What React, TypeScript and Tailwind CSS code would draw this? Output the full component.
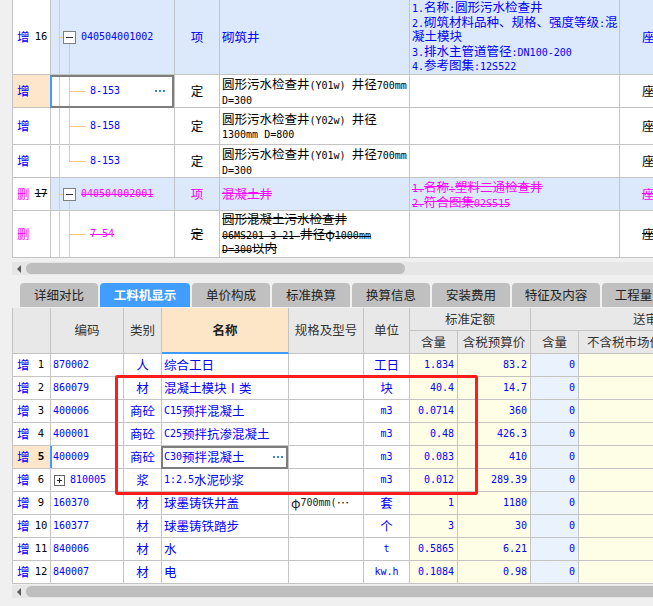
import React from "react";

const MONO = "font-['DejaVu_Sans_Mono',monospace] text-[10px] leading-none";
const MONOD = "font-['DejaVu_Sans_Mono',monospace] text-[10px] leading-none line-through";
const TL = "absolute bg-[#f5c788]";
const TOPCOLS = "grid grid-cols-[38px_124px_45px_190px_210px_60px]";
const BOTCOLS = "grid grid-cols-[38px_73px_38px_127px_75px_46px_48px_73px_48px_92px_90px]";
const C = "relative border-r border-b border-[#c4c4c4] whitespace-nowrap";
const BLUE = "text-[#0000ff]";
const MAG = "text-[#ff00ff]";
const LB = "bg-[#dce8fb]";

function M({ t, del }: { t: string; del?: boolean }) {
  const parts = t.split(/([\x20-\x7E]+)/).filter((p) => p !== "");
  return (
    <>
      {parts.map((p, i) =>
        /^[\x20-\x7E]+$/.test(p) ? (
          <span key={i} className={del ? MONOD : MONO}>
            {p}
          </span>
        ) : (
          <span key={i} className={del ? "line-through" : ""}>
            {p}
          </span>
        )
      )}
    </>
  );
}

function Label({ mark, n, del, bold }: { mark: string; n: string; del?: boolean; bold?: boolean }) {
  return (
    <div className="flex items-center h-full pl-[4px]">
      <span className={del ? MAG : BLUE}>{mark}</span>
      <span
        className={
          bold
            ? "font-['DejaVu_Sans_Mono',monospace] text-[11px] font-bold ml-[3px] w-[17px] text-center"
            : del
            ? "font-['DejaVu_Sans_Mono',monospace] text-[10.5px] ml-[3px] w-[17px] text-center line-through"
            : "font-['DejaVu_Sans_Mono',monospace] text-[10.5px] ml-[3px] w-[17px] text-center"
        }
      >
        {n}
      </span>
    </div>
  );
}

function Dots({ cls }: { cls: string }) {
  return (
    <div className={cls}>
      <i className="block w-[2px] h-[2px] bg-[#3b86d6]" />
      <i className="block w-[2px] h-[2px] bg-[#3b86d6]" />
      <i className="block w-[2px] h-[2px] bg-[#3b86d6]" />
    </div>
  );
}

function MinusBox({ cls }: { cls: string }) {
  return (
    <div className={cls}>
      <div className="w-[7px] h-px bg-[#333]" />
    </div>
  );
}

function L({ t, del, h }: { t: string; del?: boolean; h: string }) {
  return (
    <div className={h}>
      <M t={t} del={del} />
    </div>
  );
}

function TopGrid() {
  return (
    <div className="ml-[12px] border-l border-[#c4c4c4]">
      {/* Row 16 */}
      <div className={`${TOPCOLS} h-[75px]`}>
        <div className={`${C} bg-white`}>
          <Label mark="增" n="16" />
        </div>
        <div className={`${C} ${LB} flex items-center`}>
          <div className={`${TL} left-[8px] top-0 bottom-[-1px] w-px`} />
          <div className={`${TL} left-[8px] top-[37px] w-[4px] h-px`} />
          <MinusBox cls="absolute left-[12px] top-[31px] w-[13px] h-[13px] border border-[#808080] bg-white flex items-center justify-center" />
          <div className={`${TL} left-[18px] top-[44px] bottom-[-1px] w-px`} />
          <span className={`${MONO} ${BLUE} ml-[30px]`}>040504001002</span>
        </div>
        <div className={`${C} ${LB} flex items-center justify-center ${BLUE}`}>项</div>
        <div className={`${C} ${LB} flex items-center pl-[2px] ${BLUE}`}>砌筑井</div>
        <div className={`${C} ${LB} flex flex-col pl-[2px] ${BLUE}`}>
          <L h="h-[14.5px] leading-[14.5px]" t="1.名称:圆形污水检查井" />
          <L h="h-[14.5px] leading-[14.5px]" t="2.砌筑材料品种、规格、强度等级:混" />
          <L h="h-[14.5px] leading-[14.5px]" t="凝土模块" />
          <L h="h-[14.5px] leading-[14.5px]" t="3.排水主管道管径:DN100-200" />
          <L h="h-[14.5px] leading-[14.5px]" t="4.参考图集:12S522" />
        </div>
        <div className={`${C} ${LB} flex items-center pl-[22px] ${BLUE}`}>座</div>
      </div>

      {/* 8-153 selected */}
      <div className={`${TOPCOLS} h-[33px]`}>
        <div className={`${C} bg-[#fde6c9]`}>
          <Label mark="增" n="" />
        </div>
        <div className={`${C} bg-white flex items-center`}>
          <div className={`${TL} left-[8px] top-[-1px] bottom-[-1px] w-px`} />
          <div className={`${TL} left-[18px] top-[-1px] bottom-[-1px] w-px`} />
          <div className={`${TL} left-[18px] top-[16px] w-[17px] h-px`} />
          <span className={`${MONO} ${BLUE} ml-[39px]`}>8-153</span>
          <Dots cls="absolute right-[9px] top-[15px] flex gap-[2px]" />
          <div className="absolute left-[-1px] top-0 right-0 bottom-[-1px] border-2 border-[#7d7d7d] border-l-[#3f9cff] z-10" />
        </div>
        <div className={`${C} bg-white flex items-center justify-center`}>定</div>
        <div className={`${C} bg-white flex flex-col justify-center pl-[2px]`}>
          <L h="h-[15px] leading-[15px]" t="圆形污水检查井(Y01w) 井径700mm" />
          <L h="h-[15px] leading-[15px]" t="D=300" />
        </div>
        <div className={`${C} bg-white`} />
        <div className={`${C} bg-white flex items-center pl-[22px]`}>座</div>
      </div>

      {/* 8-158 */}
      <div className={`${TOPCOLS} h-[37px]`}>
        <div className={`${C} bg-white`}>
          <Label mark="增" n="" />
        </div>
        <div className={`${C} bg-white flex items-center`}>
          <div className={`${TL} left-[8px] top-[-1px] bottom-[-1px] w-px`} />
          <div className={`${TL} left-[18px] top-[-1px] bottom-[-1px] w-px`} />
          <div className={`${TL} left-[18px] top-[18px] w-[17px] h-px`} />
          <span className={`${MONO} ${BLUE} ml-[39px]`}>8-158</span>
        </div>
        <div className={`${C} bg-white flex items-center justify-center`}>定</div>
        <div className={`${C} bg-white flex flex-col justify-center pl-[2px]`}>
          <L h="h-[14px] leading-[14px]" t="圆形污水检查井(Y02w) 井径" />
          <L h="h-[14px] leading-[14px]" t="1300mm D=800" />
        </div>
        <div className={`${C} bg-white`} />
        <div className={`${C} bg-white flex items-center pl-[22px]`}>座</div>
      </div>

      {/* 8-153 last */}
      <div className={`${TOPCOLS} h-[33px]`}>
        <div className={`${C} bg-white`}>
          <Label mark="增" n="" />
        </div>
        <div className={`${C} bg-white flex items-center`}>
          <div className={`${TL} left-[8px] top-[-1px] bottom-[-1px] w-px`} />
          <div className={`${TL} left-[18px] top-[-1px] h-[17px] w-px`} />
          <div className={`${TL} left-[18px] top-[16px] w-[17px] h-px`} />
          <span className={`${MONO} ${BLUE} ml-[39px]`}>8-153</span>
        </div>
        <div className={`${C} bg-white flex items-center justify-center`}>定</div>
        <div className={`${C} bg-white flex flex-col justify-center pl-[2px]`}>
          <L h="h-[15px] leading-[15px]" t="圆形污水检查井(Y01w) 井径700mm" />
          <L h="h-[15px] leading-[15px]" t="D=300" />
        </div>
        <div className={`${C} bg-white`} />
        <div className={`${C} bg-white flex items-center pl-[22px]`}>座</div>
      </div>

      {/* Row 17 deleted */}
      <div className={`${TOPCOLS} h-[33px]`}>
        <div className={`${C} bg-white`}>
          <Label mark="删" n="17" del />
        </div>
        <div className={`${C} ${LB} flex items-center`}>
          <div className={`${TL} left-[8px] top-[-1px] bottom-[-1px] w-px`} />
          <div className={`${TL} left-[8px] top-[16px] w-[4px] h-px`} />
          <MinusBox cls="absolute left-[12px] top-[10px] w-[13px] h-[13px] border border-[#808080] bg-white flex items-center justify-center" />
          <div className={`${TL} left-[18px] top-[23px] bottom-[-1px] w-px`} />
          <span className={`${MONOD} ${MAG} ml-[30px]`}>040504002001</span>
        </div>
        <div className={`${C} ${LB} flex items-center justify-center ${MAG}`}>项</div>
        <div className={`${C} ${LB} flex items-center pl-[2px] ${MAG}`}>
          <span className="line-through">混凝土井</span>
        </div>
        <div className={`${C} ${LB} flex flex-col pl-[2px] pt-[1px] ${MAG}`}>
          <L h="h-[15px] leading-[15px]" t="1.名称:塑料二通检查井" del />
          <L h="h-[15px] leading-[15px]" t="2.符合图集02S515" del />
        </div>
        <div className={`${C} ${LB} flex items-center pl-[22px] ${MAG}`}>
          <span className="line-through">座</span>
        </div>
      </div>

      {/* 7-54 */}
      <div className={`${TOPCOLS} h-[47px]`}>
        <div className={`${C} bg-white`}>
          <Label mark="删" n="" del />
        </div>
        <div className={`${C} bg-white flex items-center`}>
          <div className={`${TL} left-[8px] top-[-1px] bottom-[-1px] w-px`} />
          <div className={`${TL} left-[18px] top-[-1px] bottom-[-1px] w-px`} />
          <div className={`${TL} left-[18px] top-[23px] w-[17px] h-px`} />
          <span className={`${MONOD} ${MAG} ml-[39px]`}>7-54</span>
        </div>
        <div className={`${C} bg-white flex items-center justify-center`}>
          <span className="line-through">定</span>
        </div>
        <div className={`${C} bg-white flex flex-col justify-center pl-[2px]`}>
          <L h="h-[14.5px] leading-[14.5px]" t="圆形混凝土污水检查井" del />
          <L h="h-[14.5px] leading-[14.5px]" t="06MS201-3-21 井径φ1000mm" del />
          <L h="h-[14.5px] leading-[14.5px]" t="D=300以内" del />
        </div>
        <div className={`${C} bg-white`} />
        <div className={`${C} bg-white flex items-center pl-[22px]`}>
          <span className="line-through">座</span>
        </div>
      </div>
    </div>
  );
}

function ScrollBar({ full }: { full?: boolean }) {
  return (
    <div className="ml-[12px] h-[13px] bg-[#e6e6e6] flex items-center">
      <div className="ml-[5px] w-0 h-0 border-y-[4px] border-y-transparent border-r-[4px] border-r-[#5a5a5a]" />
      <div
        className={
          full
            ? "ml-[5px] flex-1 h-[11px] rounded-l-full bg-[#bebebe]"
            : "ml-[5px] w-[379px] h-[11px] rounded-full bg-[#bebebe]"
        }
      />
    </div>
  );
}

const TABS: { t: string; w: string; active?: boolean }[] = [
  { t: "详细对比", w: "w-[78px]" },
  { t: "工料机显示", w: "w-[90px]", active: true },
  { t: "单价构成", w: "w-[78px]" },
  { t: "标准换算", w: "w-[78px]" },
  { t: "换算信息", w: "w-[78px]" },
  { t: "安装费用", w: "w-[78px]" },
  { t: "特征及内容", w: "w-[88px]" },
  { t: "工程量明细", w: "w-[88px]" },
];

function Tabs() {
  return (
    <div className="flex gap-[2px] pl-[20px] h-[24px]">
      {TABS.map((tab) => (
        <div
          key={tab.t}
          className={
            tab.active
              ? `${tab.w} shrink-0 h-full rounded-t-[4px] bg-[#419dff] text-white font-bold flex items-center justify-center`
              : `${tab.w} shrink-0 h-full rounded-t-[4px] bg-[#c0c0c0] text-[#222] flex items-center justify-center`
          }
        >
          {tab.t}
        </div>
      ))}
    </div>
  );
}

const H = "bg-[#e8e8e8] border-r border-b border-[#c4c4c4] flex items-center justify-center text-[#333] whitespace-nowrap overflow-hidden";

type Row = {
  n: string;
  code: string;
  type: string;
  name: string;
  spec?: string;
  unit: string;
  q: string;
  p: string;
  sel?: boolean;
  plus?: boolean;
};

const ROWS: Row[] = [
  { n: "1", code: "870002", type: "人", name: "综合工日", unit: "工日", q: "1.834", p: "83.2" },
  { n: "2", code: "860079", type: "材", name: "混凝土模块Ⅰ类", unit: "块", q: "40.4", p: "14.7" },
  { n: "3", code: "400006", type: "商砼", name: "C15预拌混凝土", unit: "m3", q: "0.0714", p: "360" },
  { n: "4", code: "400001", type: "商砼", name: "C25预拌抗渗混凝土", unit: "m3", q: "0.48", p: "426.3" },
  { n: "5", code: "400009", type: "商砼", name: "C30预拌混凝土", unit: "m3", q: "0.083", p: "410", sel: true },
  { n: "6", code: "810005", type: "浆", name: "1:2.5水泥砂浆", unit: "m3", q: "0.012", p: "289.39", plus: true },
  { n: "9", code: "160370", type: "材", name: "球墨铸铁井盖", spec: "φ700mm(…", unit: "套", q: "1", p: "1180" },
  { n: "10", code: "160377", type: "材", name: "球墨铸铁踏步", unit: "个", q: "3", p: "30" },
  { n: "11", code: "840006", type: "材", name: "水", unit: "t", q: "0.5865", p: "6.21" },
  { n: "12", code: "840007", type: "材", name: "电", unit: "kw.h", q: "0.1084", p: "0.98" },
];

function BottomGrid() {
  return (
    <div className="ml-[12px] border-l border-[#c4c4c4]">
      <div className={`${BOTCOLS} grid-rows-[23px_23px] h-[46px]`}>
        <div className={`${H} row-span-2`} />
        <div className={`${H} row-span-2`}>编码</div>
        <div className={`${H} row-span-2`}>类别</div>
        <div className="row-span-2 bg-[#fde5c8] border-r border-r-[#c4c4c4] border-b-2 border-b-[#3c9cff] flex items-center justify-center font-bold text-[#222]">
          名称
        </div>
        <div className={`${H} row-span-2`}>规格及型号</div>
        <div className={`${H} row-span-2`}>单位</div>
        <div className={`${H} col-span-2`}>标准定额</div>
        <div className={`${H} col-span-3`}>送审</div>
        <div className={H}>含量</div>
        <div className={H}>含税预算价</div>
        <div className={H}>含量</div>
        <div className={H}>不含税市场价</div>
        <div className={H}>含税市场价</div>
      </div>
      {ROWS.map((r) => (
        <div key={r.n} className={`${BOTCOLS} h-[23px]`}>
          <div className={r.sel ? `${C} bg-[#fde6c9]` : `${C} bg-white`}>
            <Label mark="增" n={r.n} bold={r.sel} />
          </div>
          <div className={`${C} bg-white flex items-center ${BLUE}`}>
            {r.sel && <div className="absolute left-[-1px] top-0 bottom-0 w-[2px] bg-[#3f9cff]" />}
            {r.plus && (
              <div className="ml-[3px] mr-[5px] w-[11px] h-[11px] border border-[#666] bg-white relative shrink-0">
                <div className="absolute left-[2px] top-[4px] w-[5px] h-px bg-[#222]" />
                <div className="absolute left-[4px] top-[2px] w-px h-[5px] bg-[#222]" />
              </div>
            )}
            <span className={r.plus ? MONO : `${MONO} ml-[2px]`}>{r.code}</span>
          </div>
          <div className={`${C} bg-white flex items-center justify-center ${BLUE}`}>{r.type}</div>
          <div className={`${C} bg-white flex items-center pl-[2px] ${BLUE}`}>
            <M t={r.name} />
            {r.sel && (
              <>
                <Dots cls="absolute right-[5px] top-[10px] flex gap-[2px]" />
                <div className="absolute left-[-1px] top-0 right-0 bottom-[-1px] border-2 border-[#7d7d7d] z-10" />
              </>
            )}
          </div>
          <div className={`${C} bg-white flex items-center pl-[2px] overflow-hidden text-[#222]`}>
            {r.spec ? <M t={r.spec} /> : null}
          </div>
          <div className={`${C} bg-white flex items-center justify-center ${BLUE}`}>
            <M t={r.unit} />
          </div>
          <div className={`${C} bg-[#fefde6] flex items-center justify-end pr-[3px] ${BLUE}`}>
            <span className={MONO}>{r.q}</span>
          </div>
          <div className={`${C} bg-[#fefde6] flex items-center justify-end pr-[3px] ${BLUE}`}>
            <span className={MONO}>{r.p}</span>
          </div>
          <div className={`${C} bg-[#eaf2fd] flex items-center justify-end pr-[3px] ${BLUE}`}>
            <span className={MONO}>0</span>
          </div>
          <div className={`${C} bg-[#fefde6]`} />
          <div className={`${C} bg-[#fefde6]`} />
        </div>
      ))}
    </div>
  );
}

export default function App() {
  return (
    <div className="relative w-[653px] h-[606px] overflow-hidden bg-[#f0f0f0] font-['Noto_Sans_CJK_SC',sans-serif] text-[12.5px] text-black">
      <TopGrid />
      <div className="h-[4px]" />
      <ScrollBar />
      <div className="h-[8px]" />
      <Tabs />
      <div className="h-[1px]" />
      <BottomGrid />
      <div className="h-[1px]" />
      <ScrollBar full />
      <div className="absolute left-[115px] top-[375px] w-[363px] h-[120px] border-[3px] border-[#ff1c1c] rounded-[2px] z-20" />
    </div>
  );
}
